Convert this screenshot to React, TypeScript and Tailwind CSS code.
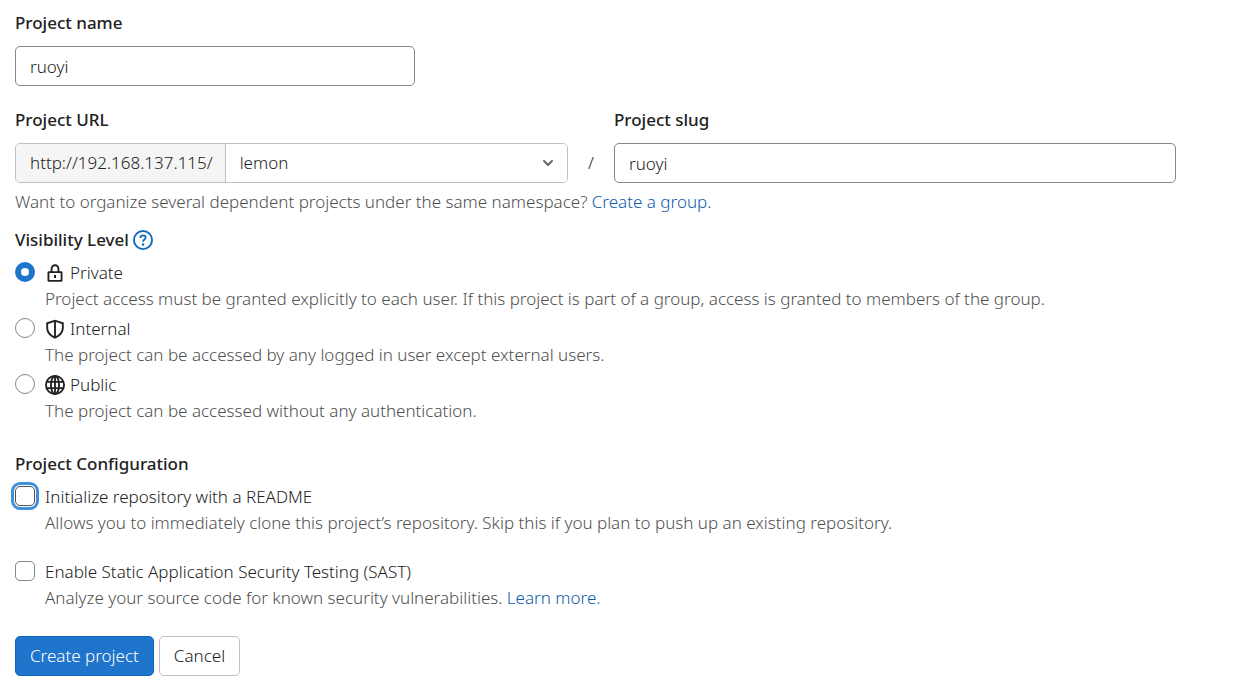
import React from 'react';
import { clsx } from 'clsx';

interface OptionProps {
  id: string;
  label: string;
  description: React.ReactNode;
  icon?: React.ReactNode;
  type: 'radio' | 'checkbox';
  name: string;
  defaultChecked?: boolean;
  focused?: boolean;
}

const LockIcon = () => (
  <svg viewBox="0 0 16 16" className="size-5" fill="currentColor" aria-hidden="true">
    <path
      fillRule="evenodd"
      d="M4.500 6.500V4.500a3.500 3.500 0 1 1 7 0v2H13a1 1 0 0 1 1 1V14a1 1 0 0 1-1 1H3a1 1 0 0 1-1-1V7.500a1 1 0 0 1 1-1h1.500ZM6 6.500h4v-2a2 2 0 1 0-4 0v2ZM3.500 8v5.500h9V8h-9ZM7.200 9.500h1.600v2.500H7.200V9.500Z"
    />
  </svg>
);

const ShieldIcon = () => (
  <svg viewBox="0 0 16 16" className="size-5" fill="currentColor" aria-hidden="true">
    <path
      fillRule="evenodd"
      d="M8 .5 1 2.800V7c0 3.900 2.600 6.900 7 8.700 4.400-1.800 7-4.800 7-8.700V2.800L8 .5ZM7.250 2.300 2.500 3.900V7c0 2.900 1.700 5.200 4.750 6.700V2.300Zm1.500 11.400c3.050-1.500 4.750-3.800 4.750-6.700V3.900L8.750 2.300v11.400Z"
    />
  </svg>
);

const GlobeIcon = () => (
  <svg
    viewBox="0 0 16 16"
    className="size-5"
    fill="none"
    stroke="currentColor"
    strokeWidth="1.5"
    aria-hidden="true"
  >
    <circle cx="8" cy="8" r="7.250" />
    <ellipse cx="8" cy="8" rx="3.250" ry="7.250" />
    <path d="M1.500 5.500h13M1.500 10.500h13M8 1v14" />
  </svg>
);

const HelpIcon = () => (
  <svg
    viewBox="0 0 16 16"
    className="size-5"
    fill="none"
    stroke="currentColor"
    strokeWidth="1.5"
    aria-hidden="true"
  >
    <circle cx="8" cy="8" r="7.250" />
    <path d="M5.900 6.300C5.900 5 6.800 4.250 8 4.250s2.100.8 2.100 1.900C10.100 7.600 8 7.600 8 9.400" />
    <circle cx="8" cy="11.500" r="1" fill="currentColor" stroke="none" />
  </svg>
);

const ChevronIcon = () => (
  <svg
    viewBox="0 0 16 16"
    className="pointer-events-none absolute top-[11px] right-[11px] size-4 text-[#666]"
    fill="none"
    stroke="currentColor"
    strokeWidth="2"
    strokeLinecap="round"
    strokeLinejoin="round"
    aria-hidden="true"
  >
    <path d="M4 6l4 4 4-4" />
  </svg>
);

const Option: React.FC<OptionProps> = ({
  id,
  label,
  description,
  icon,
  type,
  name,
  defaultChecked,
  focused,
}) => (
  <div className="flex items-start gap-[10px]">
    <input
      id={id}
      type={type}
      name={name}
      defaultChecked={defaultChecked}
      aria-describedby={`${id}-help`}
      className={clsx(
        'mt-[2px] size-5 shrink-0 appearance-none border bg-white outline-none',
        type === 'radio'
          ? 'rounded-full border-[#868686] checked:border-6 checked:border-[#1f75cb]'
          : 'rounded-[5px] checked:bg-[#1f75cb]',
        type === 'checkbox' && (focused ? 'border-[#525252]' : 'border-[#868686]'),
        focused && 'shadow-[0_0_0_1px_#fff,0_0_0_4px_#428fdc]'
      )}
    />
    <div>
      <label htmlFor={id} className="flex items-center gap-[5px]">
        {icon}
        {label}
      </label>
      <p id={`${id}-help`} className="leading-[25px] text-[#4f4f4f]">
        {description}
      </p>
    </div>
  </div>
);

const inputClass =
  'h-10 w-full rounded-[5px] border border-[#868686] bg-white px-[14px] outline-none';
const labelClass = 'mb-[10px] block font-medium';

export default function App() {
  return (
    <form
      className="bg-white pt-[10px] pr-[73px] pb-5 pl-[15px] font-['Noto_Sans','Open_Sans',sans-serif] text-[17px] leading-[26px] font-light text-[#222]"
      onSubmit={(e) => e.preventDefault()}
    >
      <label htmlFor="project-name" className={labelClass}>
        Project name
      </label>
      <div className="max-w-[400px]">
        <input id="project-name" type="text" defaultValue="ruoyi" className={inputClass} />
      </div>

      <div className="mt-[21px] flex items-end">
        <div className="flex-1">
          <label htmlFor="namespace" className={labelClass}>
            Project URL
          </label>
          <div className="flex h-10 overflow-hidden rounded-[5px] border border-[#bfbfbf]">
            <span className="flex items-center border-r border-[#bfbfbf] bg-[#f5f5f5] pr-3 pl-[14px]">
              http://192.168.137.115/
            </span>
            <div className="relative flex-1">
              <select
                id="namespace"
                className="h-full w-full appearance-none bg-white px-[14px] outline-none"
              >
                <option>lemon</option>
              </select>
              <ChevronIcon />
            </div>
          </div>
        </div>
        <span className="flex h-10 w-[46px] items-center justify-center">/</span>
        <div className="w-[562px] max-w-1/2">
          <label htmlFor="project-slug" className={labelClass}>
            Project slug
          </label>
          <input id="project-slug" type="text" defaultValue="ruoyi" className={inputClass} />
        </div>
      </div>
      <p className="mt-[6px] text-[#4f4f4f]">
        Want to organize several dependent projects under the same namespace?{' '}
        <a href="#group" className="text-[#0b5cad]">
          Create a group.
        </a>
      </p>

      <fieldset className="mt-3">
        <legend className="mb-[7px] flex items-center gap-1 font-medium">
          Visibility Level
          <a href="#help" aria-label="Help" className="text-[#1068bf]">
            <HelpIcon />
          </a>
        </legend>
        <div className="flex flex-col gap-[5px]">
          <Option
            id="private"
            type="radio"
            name="visibility"
            label="Private"
            icon={<LockIcon />}
            defaultChecked
            description="Project access must be granted explicitly to each user. If this project is part of a group, access is granted to members of the group."
          />
          <Option
            id="internal"
            type="radio"
            name="visibility"
            label="Internal"
            icon={<ShieldIcon />}
            description="The project can be accessed by any logged in user except external users."
          />
          <Option
            id="public"
            type="radio"
            name="visibility"
            label="Public"
            icon={<GlobeIcon />}
            description="The project can be accessed without any authentication."
          />
        </div>
      </fieldset>

      <fieldset className="mt-[28px]">
        <legend className="mb-[7px] font-medium">Project Configuration</legend>
        <div className="flex flex-col gap-6">
          <Option
            id="readme"
            type="checkbox"
            name="readme"
            label="Initialize repository with a README"
            focused
            description="Allows you to immediately clone this project’s repository. Skip this if you plan to push up an existing repository."
          />
          <Option
            id="sast"
            type="checkbox"
            name="sast"
            label="Enable Static Application Security Testing (SAST)"
            description={
              <>
                Analyze your source code for known security vulnerabilities.{' '}
                <a href="#sast-docs" className="text-[#0b5cad]">
                  Learn more.
                </a>
              </>
            }
          />
        </div>
      </fieldset>

      <div className="mt-[26px] flex gap-[5px]">
        <button
          type="submit"
          className="h-10 rounded-[5px] border border-[#1068bf] bg-[#1f75cb] px-[14px] text-white"
        >
          Create project
        </button>
        <button type="button" className="h-10 rounded-[5px] border border-[#bfbfbf] bg-white px-[14px]">
          Cancel
        </button>
      </div>
    </form>
  );
}
